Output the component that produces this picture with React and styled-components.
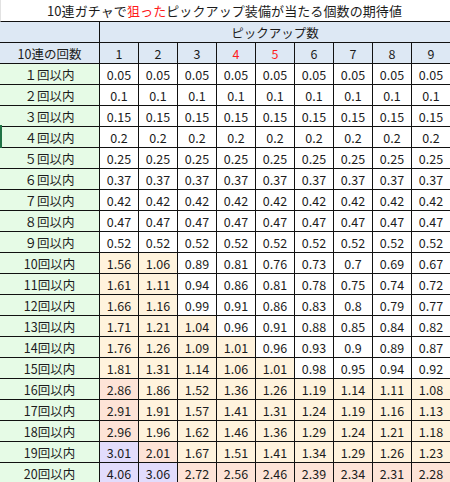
import React from "react";
import styled, { createGlobalStyle } from "styled-components";

const Global = createGlobalStyle`
  html, body { margin: 0; padding: 0; background: #ffffff; }
  body { font-family: "Noto Sans CJK JP", "Noto Sans", sans-serif; color: #1c1c1c; }
`;

const Sheet = styled.div`
  position: relative;
  width: 450px;
  height: 482px;
  overflow: hidden;
  background: #ffffff;
`;

const Title = styled.div`
  height: 21px;
  border-bottom: 1px solid #111;
  border-left: 1px solid #e2e2e2;
  box-sizing: content-box;
  display: flex;
  align-items: center;
  justify-content: center;
  font-size: 13px;
  line-height: 21px;
  letter-spacing: 0.1px;
  padding-right: 2px;
`;

const Red = styled.span`
  color: #ff1a1a;
`;

const Grid = styled.div`
  display: grid;
  grid-template-columns: 99px repeat(9, 38px);
  grid-auto-rows: 20px;
  gap: 1px;
  background: #111;
  width: 451px;
`;

const Cell = styled.div`
  display: flex;
  align-items: center;
  justify-content: center;
  font-size: 12.5px;
  line-height: 20px;
  padding-top: 1px;
  box-sizing: border-box;
  background: ${(p) => p.$bg || "#ffffff"};
  color: ${(p) => (p.$red ? "#ff1a1a" : "#1c1c1c")};
  grid-column: ${(p) => (p.$span ? `span ${p.$span}` : "auto")};
  white-space: nowrap;
`;

const Selection = styled.div`
  position: absolute;
  left: 0;
  top: 125px;
  width: 2px;
  height: 23px;
  background: #217346;
`;

const BLUE = "#dde8f4";
const GREEN = "#e6fbe6";
const ORANGE = "#fff3dd";
const SALMON = "#fde3d7";
const LAVENDER = "#e2dcfc";

const base = [0.05, 0.1, 0.15, 0.2, 0.25, 0.37, 0.42, 0.47, 0.52];
const later = [
  [1.56, 1.06, 0.89, 0.81, 0.76, 0.73, 0.7, 0.69, 0.67],
  [1.61, 1.11, 0.94, 0.86, 0.81, 0.78, 0.75, 0.74, 0.72],
  [1.66, 1.16, 0.99, 0.91, 0.86, 0.83, 0.8, 0.79, 0.77],
  [1.71, 1.21, 1.04, 0.96, 0.91, 0.88, 0.85, 0.84, 0.82],
  [1.76, 1.26, 1.09, 1.01, 0.96, 0.93, 0.9, 0.89, 0.87],
  [1.81, 1.31, 1.14, 1.06, 1.01, 0.98, 0.95, 0.94, 0.92],
  [2.86, 1.86, 1.52, 1.36, 1.26, 1.19, 1.14, 1.11, 1.08],
  [2.91, 1.91, 1.57, 1.41, 1.31, 1.24, 1.19, 1.16, 1.13],
  [2.96, 1.96, 1.62, 1.46, 1.36, 1.29, 1.24, 1.21, 1.18],
  [3.01, 2.01, 1.67, 1.51, 1.41, 1.34, 1.29, 1.26, 1.23],
  [4.06, 3.06, 2.72, 2.56, 2.46, 2.39, 2.34, 2.31, 2.28],
];

const rows = [
  ...base.map((v, i) => ({
    label: `${String.fromCharCode(0xff11 + i)}回以内`,
    values: Array(9).fill(v),
  })),
  ...later.map((values, i) => ({ label: `${10 + i}回以内`, values })),
];

const colorFor = (v) => {
  if (v >= 3) return LAVENDER;
  if (v >= 2) return SALMON;
  if (v >= 1) return ORANGE;
  return "#ffffff";
};

export default function App() {
  return (
    <Sheet>
      <Global />
      <Title>
        10連ガチャで<Red>狙った</Red>ピックアップ装備が当たる個数の期待値
      </Title>
      <Grid>
        <Cell $bg={BLUE} />
        <Cell $bg={BLUE} $span={9}>ピックアップ数</Cell>
        <Cell $bg={BLUE}>10連の回数</Cell>
        {[1, 2, 3, 4, 5, 6, 7, 8, 9].map((n) => (
          <Cell key={n} $bg={BLUE} $red={n === 4 || n === 5}>
            {n}
          </Cell>
        ))}
        {rows.map((r) => (
          <React.Fragment key={r.label}>
            <Cell $bg={GREEN}>{r.label}</Cell>
            {r.values.map((v, j) => (
              <Cell key={j} $bg={colorFor(v)}>
                {String(v)}
              </Cell>
            ))}
          </React.Fragment>
        ))}
      </Grid>
      <Selection />
    </Sheet>
  );
}
